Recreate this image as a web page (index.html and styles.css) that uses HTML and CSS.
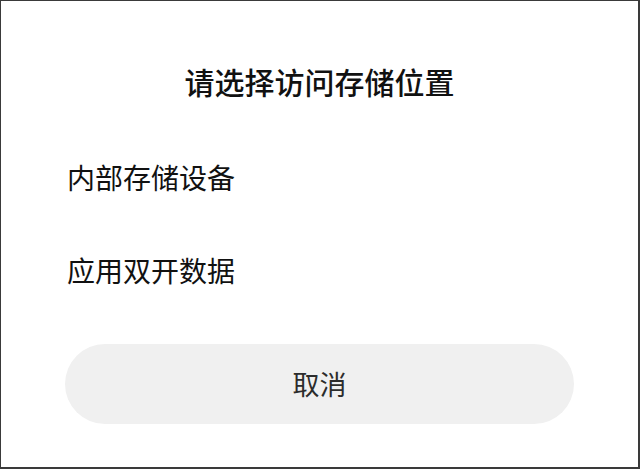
FILE: index.html
```html
<!DOCTYPE html>
<html lang="zh-CN">
<head>
<meta charset="utf-8">
<title>请选择访问存储位置</title>
<link rel="stylesheet" href="styles.css">
</head>
<body>
<div class="dialog">
  <h1 class="title">请选择访问存储位置</h1>
  <ul class="options">
    <li class="option">内部存储设备</li>
    <li class="option">应用双开数据</li>
  </ul>
  <button class="cancel" type="button">取消</button>
</div>
</body>
</html>
```
FILE: styles.css
```css
html, body {
  margin: 0;
  padding: 0;
  background: #ffffff;
}
body {
  font-family: "Noto Sans CJK SC", "Noto Sans", sans-serif;
}
.dialog {
  box-sizing: border-box;
  width: 640px;
  height: 469px;
  border-style: solid;
  border-color: #3a3a3a;
  border-width: 1px 2px 2px 1px;
  padding: 65px 64px 0 64px;
  display: flex;
  flex-direction: column;
  background: #ffffff;
}
.title {
  margin: 0;
  height: 30px;
  font-size: 30px;
  line-height: 30px;
  font-weight: 500;
  text-align: center;
  color: #111111;
}
.options {
  list-style: none;
  margin: 34px 0 0 0;
  padding: 0;
}
.option {
  height: 93px;
  display: flex;
  align-items: center;
  padding-left: 2px;
  font-size: 28px;
  line-height: 28px;
  font-weight: 400;
  color: #111111;
}
.cancel {
  margin-top: 28px;
  width: 509px;
  height: 80px;
  border: none;
  border-radius: 40px;
  background: #f0f0f0;
  font-family: "Noto Sans CJK SC", "Noto Sans", sans-serif;
  font-size: 27px;
  line-height: 78px;
  color: #2c2c2c;
  padding: 0;
}
```
